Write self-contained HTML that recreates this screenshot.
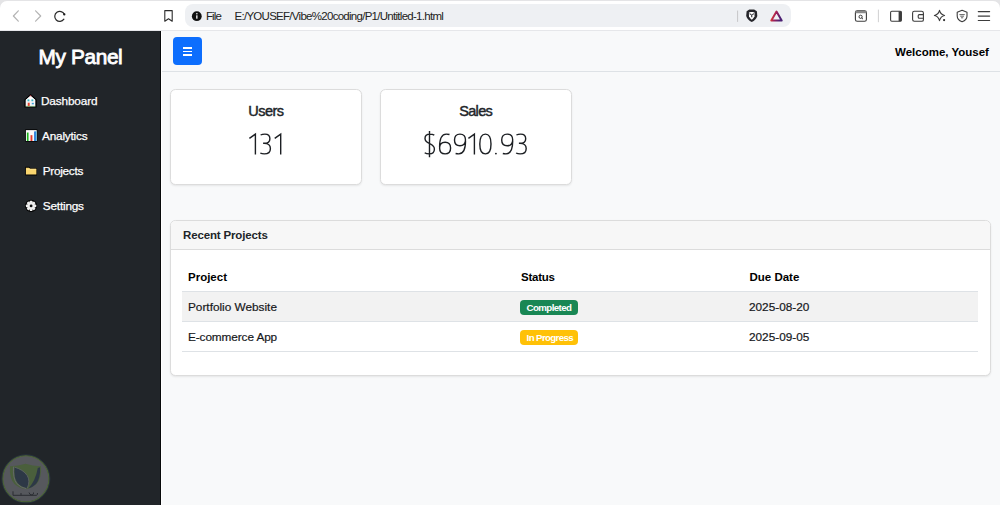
<!DOCTYPE html>
<html><head><meta charset="utf-8">
<style>
*{box-sizing:border-box;margin:0;padding:0}
html,body{width:1000px;height:505px;overflow:hidden;background:#f8f9fa;font-family:"Liberation Sans",sans-serif;position:relative}
.t{position:absolute;line-height:1;white-space:nowrap}
#chrome{position:absolute;left:0;top:0;width:1000px;height:31px;background:#e4e4e6}
#tb{position:absolute;left:0;top:1px;width:1000px;height:30px;background:#fff;border-radius:7px 7px 0 0;border-bottom:1px solid #e6e7ea}
#addr{position:absolute;left:185px;top:4px;width:606px;height:23px;background:#eef0f3;border-radius:8px}
#side{position:absolute;left:0;top:31px;width:161px;height:474px;background:#212529}
#nav{position:absolute;left:161px;top:71px;width:839px;height:1px;background:#dee2e6}
#btn{position:absolute;left:173px;top:37px;width:29px;height:28px;background:#0d6efd;border-radius:4px}
#btn i{position:absolute;left:9.8px;width:9.5px;height:1.3px;background:#fff}
.card{position:absolute;background:#fff;border:1px solid #dcdcdc;border-radius:5.5px;box-shadow:0 1px 2px rgba(0,0,0,.08)}
.badge{position:absolute;height:15px;border-radius:4px;color:#fff;font-weight:bold}
</style></head><body>
<div id="chrome"></div>
<div id="tb"></div>
<div id="addr"></div>
<svg style="position:absolute;left:0;top:0" width="1000" height="31" viewBox="0 0 1000 31">
 <g fill="none" stroke-linecap="round" stroke-linejoin="round">
  <path d="M18.3 10.8 L13.4 16 L18.3 21.2" stroke="#b4b4b4" stroke-width="1.2"/>
  <path d="M35.6 10.8 L40.7 16 L35.6 21.2" stroke="#b4b4b4" stroke-width="1.2"/>
  <path d="M64.3 14.3 A5 5 0 1 0 63.9 19.2" stroke="#2b2b2b" stroke-width="1.2"/>
  <path d="M164.8 10.6 H172.2 V21.2 L168.5 18.8 L164.8 21.2 Z" stroke="#2b2b2b" stroke-width="1.1"/>
  <path d="M737.6 11 V21.5" stroke="#c6c6c8" stroke-width="1"/>
  <path d="M878.4 10 V21.8" stroke="#d0d0d2" stroke-width="1"/>
  <rect x="855.4" y="10.9" width="11" height="10.4" rx="1.8" stroke="#3c3c3c" stroke-width="1.1"/>
  <rect x="890.6" y="11.3" width="10.8" height="10" rx="1.2" stroke="#3c3c3c" stroke-width="1.1"/>
  <path d="M912.6 13 Q912.6 11.3 914.3 11.3 H921.5 Q923.4 11.3 923.4 13 V20 Q923.4 21.3 921.7 21.3 H914.3 Q912.6 21.3 912.6 19.6 Z" stroke="#3c3c3c" stroke-width="1.1"/>
  <path d="M923.4 14.6 H919.3 Q918.2 14.6 918.2 15.8 V17 Q918.2 18.3 919.3 18.3 H923.4" stroke="#3c3c3c" stroke-width="1.1"/>
  <path d="M939.5 10.4 Q940.6 14.6 944.6 15.5 Q940.6 16.4 939.5 20.6 Q938.4 16.4 934.4 15.5 Q938.4 14.6 939.5 10.4 Z" stroke="#3c3c3c" stroke-width="1.1"/>
  <path d="M962.1 10.3 L967 12.2 V16 Q967 20 962.1 21.7 Q957.2 20 957.2 16 V12.2 Z" stroke="#3c3c3c" stroke-width="1.1"/>
  <path d="M959.8 14.6 H964.4 M960.6 16.2 H963.6 M961.4 17.8 H962.8" stroke="#555" stroke-width="0.9"/>
  <path d="M978.3 11.6 H989.6 M978.3 16.1 H989.6 M978.3 20.5 H989.6" stroke="#3c3c3c" stroke-width="1.2"/>
  <path d="M771.3 20.6 L776.5 11.6 L781.7 20.6 Z" stroke="url(#bat)" stroke-width="2"/>
 </g>
 <defs><linearGradient id="bat" x1="0" y1="0" x2="1" y2="0.3"><stop offset="0" stop-color="#ff4a1a"/><stop offset="0.5" stop-color="#9b1f5c"/><stop offset="1" stop-color="#4b2173"/></linearGradient></defs>
 <circle cx="64.3" cy="14.4" r="1.15" fill="#1a1a1a"/>
 <rect x="855.4" y="10.9" width="11" height="2.4" rx="1" fill="#8a8a8a"/>
 <circle cx="860.6" cy="16.8" r="1.6" fill="none" stroke="#3c3c3c" stroke-width="1"/>
 <path d="M861.7 17.9 L863 19.2" stroke="#3c3c3c" stroke-width="1"/>
 <rect x="898.6" y="11.3" width="2.8" height="10" fill="#3c3c3c"/>
 <circle cx="944.1" cy="20.1" r="1.1" fill="#2b2b2b"/>
 <circle cx="196.8" cy="16.2" r="4.9" fill="#111"/>
 <rect x="196.2" y="15.3" width="1.3" height="3.4" fill="#fff"/>
 <circle cx="196.85" cy="13.8" r="0.75" fill="#fff"/>
 <path d="M746.6 11.2 L749.3 9.6 H754.2 L756.9 11.2 L757.3 16 Q756 20 751.75 22 Q747.5 20 746.2 16 Z" fill="#26262b"/>
 <path d="M748.9 12.6 L750.6 11.9 H752.9 L754.6 12.6 L754.5 16.4 L752.9 18.7 L751.75 19.8 L750.6 18.7 L749 16.4 Z" fill="#fff"/>
 <path d="M749.6 13.6 L751.1 14.6 M753.9 13.6 L752.4 14.6 M751.75 14.6 V17.2" stroke="#26262b" stroke-width="1.1" fill="none"/>
</svg>
<div class="t" style="left:206px;top:10.7px;font-size:11.5px;color:#222;letter-spacing:-0.9px">File</div>
<div class="t" style="left:234.5px;top:10.7px;font-size:11.5px;color:#222;letter-spacing:-0.72px">E:/YOUSEF/Vibe%20coding/P1/Untitled-1.html</div>

<div id="side"></div>
<svg style="position:absolute;left:0;top:31px" width="161" height="474" viewBox="0 31 161 474">
 <!-- house -->
 <g transform="translate(30.5 101) scale(1.15) translate(-30.5 -101)">
 <path d="M30.5 95.6 L35.4 100 V106.2 H25.7 V100 Z" fill="#000" stroke="#000" stroke-width="1" stroke-linejoin="round"/>
 <path d="M30.5 96.4 L34.7 100.2 V105.6 H26.3 V100.2 Z" fill="#f4f4f4"/>
 <path d="M30.5 96.4 L34.7 100.2 L26.3 100.2 Z" fill="#fff"/>
 <path d="M29.2 96.9 L31.8 96.9 L30.5 95.9 Z" fill="#e0525a"/>
 <rect x="27.9" y="99.6" width="1.6" height="1.6" fill="#36b8c4"/>
 <rect x="31.3" y="99.6" width="1.6" height="1.6" fill="#36b8c4"/>
 <rect x="31.6" y="102.6" width="1.8" height="1.3" fill="#3aa0d8"/>
 <rect x="28.1" y="102.5" width="1.7" height="3.1" fill="#e8432c"/>
 <path d="M26.3 105.6 H34.7" stroke="#8fd68a" stroke-width="0.6"/>
  </g>
 <!-- chart -->
 <g transform="translate(31.3 135.5) scale(1.1) translate(-31.3 -135.5)">
 <rect x="25.8" y="129.9" width="11" height="11.2" fill="#000"/>
 <rect x="26.4" y="130.6" width="9.8" height="9.9" fill="#fafafa"/>
 <rect x="27.3" y="132.8" width="1.5" height="7.7" fill="#1bb51b"/>
 <rect x="30.6" y="135.2" width="1.7" height="5.3" fill="#e53a2a"/>
 <rect x="33.9" y="131.8" width="1.7" height="8.7" fill="#1f6fd6"/>
 <rect x="35.2" y="131.8" width="0.8" height="8.7" fill="#3fc1f0"/>
  </g>
 <!-- folder -->
 <g transform="translate(31.1 171.1) scale(1.1) translate(-31.1 -171.1)">
 <path d="M25.8 167.2 H29.5 L30.6 168.4 H36.5 V175 H25.8 Z" fill="#000"/>
 <path d="M26.4 168 H29.2 L30.3 169 H35.9 V174.3 H26.4 Z" fill="#f9d56e"/>
 <path d="M26.6 169.5 H35.7" stroke="#ffe79a" stroke-width="0.6"/>
  </g>
 <!-- gear -->
 <g transform="translate(31.1 205.9) scale(1.08) translate(-31.1 -205.9)">
 <g transform="translate(31.1 205.9)">
  <circle r="5.6" fill="#000"/>
  <g fill="#eee">
   <circle r="3.5"/>
   <rect x="-1.2" y="-4.8" width="2.4" height="9.6" rx="0.6"/>
   <rect x="-1.2" y="-4.8" width="2.4" height="9.6" rx="0.6" transform="rotate(45)"/>
   <rect x="-1.2" y="-4.8" width="2.4" height="9.6" rx="0.6" transform="rotate(90)"/>
   <rect x="-1.2" y="-4.8" width="2.4" height="9.6" rx="0.6" transform="rotate(135)"/>
  </g>
  <circle r="1.3" fill="#111"/>
 </g>
  </g>
 <!-- watermark -->
 <circle cx="25.9" cy="478.8" r="24" fill="none" stroke="#2c3a4a" stroke-width="1" opacity="0.7"/>
 <circle cx="25.9" cy="478.8" r="23" fill="#56585d" stroke="#4d6538" stroke-width="1.1"/>
 <path d="M25.5 463.8 Q33 466.3 41 466.2 Q41.8 478.5 36.5 484 Q31.5 488.4 25.5 489 Q19.5 488.4 14.5 484 Q9.2 478.5 10 466.2 Q18 466.3 25.5 463.8 Z" fill="#4a5f3c"/>
 <path d="M14.6 467.2 Q23 469.5 27.2 475.5 Q30.5 481 27.3 488 Q21.5 487.3 17.6 483 Q13.5 478 14.6 467.2 Z" fill="#2d3846"/>
 <path d="M13.6 466.6 Q12.6 478 16.8 483.6 Q21 487.8 26 488.6" fill="none" stroke="#66686d" stroke-width="0.9"/>
 <path d="M14.6 467.2 Q23 469.5 27.2 475.5 Q30.5 481 27.3 488" fill="none" stroke="#66686d" stroke-width="0.7"/>
 <path d="M40 467.2 Q40.6 478.5 36 484 Q32.5 487.5 28.4 488.4 Q35.5 481 37.8 468 Z" fill="#2d3846"/>
 <path d="M13 491.3 V495.3 H36.5 Q37.5 495.3 37.5 493 M21 493 V495.3 M29 492.5 Q29.5 495 32 495 Q34 494.5 33.5 492.5" fill="none" stroke="#2b2d33" stroke-width="1"/>
</svg>
<div class="t" style="left:38.5px;top:47.3px;font-size:20.8px;color:#fff;-webkit-text-stroke:0.8px #fff;letter-spacing:-0.35px">My Panel</div>
<div class="t" style="left:41px;top:96px;font-size:11.8px;color:#fff;letter-spacing:-0.15px;-webkit-text-stroke:0.25px #fff">Dashboard</div>
<div class="t" style="left:42px;top:131px;font-size:11.8px;color:#fff;letter-spacing:-0.2px;-webkit-text-stroke:0.25px #fff">Analytics</div>
<div class="t" style="left:42.8px;top:166px;font-size:11.8px;color:#fff;letter-spacing:-0.3px;-webkit-text-stroke:0.25px #fff">Projects</div>
<div class="t" style="left:42.8px;top:201px;font-size:11.8px;color:#fff;letter-spacing:-0.2px;-webkit-text-stroke:0.25px #fff">Settings</div>

<div id="nav"></div>
<div style="position:absolute;left:160px;top:31px;width:1px;height:474px;background:#08090a"></div>
<div style="position:absolute;left:161px;top:31px;width:1px;height:474px;background:#fff"></div>
<div id="btn"><i style="top:10.25px"></i><i style="top:13.85px"></i><i style="top:17.45px"></i></div>
<div class="t" style="left:895px;top:47px;font-size:11.5px;font-weight:bold;color:#000">Welcome, Yousef</div>

<div class="card" style="left:170px;top:89px;width:192px;height:96px"></div>
<div class="card" style="left:380px;top:89px;width:192px;height:96px"></div>
<div class="t" style="left:248.2px;top:103.7px;font-size:14.5px;color:#212529;-webkit-text-stroke:0.45px #212529;letter-spacing:-0.5px">Users</div>
<div class="t" style="left:459.2px;top:103.7px;font-size:14.5px;color:#212529;-webkit-text-stroke:0.45px #212529;letter-spacing:-0.65px">Sales</div>

<svg style="position:absolute;left:0;top:0" width="1000" height="200" viewBox="0 0 1000 200">
 <defs>
  <path id="g1" d="M0.4 5.0 L6.4 0.7 V21.2"/>
  <path id="g0" d="M6.3 0.7 C9.8 0.7 11.9 4.4 11.9 10.6 C11.9 16.8 9.8 20.5 6.3 20.5 C2.8 20.5 0.7 16.8 0.7 10.6 C0.7 4.4 2.8 0.7 6.3 0.7 Z"/>
  <path id="g6" d="M10.6 1.1 C9.6 0.8 8.4 0.7 7.4 0.7 C3.0 0.7 0.7 5 0.7 13.5 M6.2 8.8 C9.6 8.8 11.7 11.1 11.7 14.6 C11.7 18.2 9.5 20.5 6.2 20.5 C2.9 20.5 0.7 18.2 0.7 14.6 C0.7 11.1 2.8 8.8 6.2 8.8 Z"/>
  <path id="g9" d="M1.8 20.1 C2.8 20.4 4.0 20.5 5.0 20.5 C9.4 20.5 11.7 16.2 11.7 7.7 M6.2 12.4 C2.8 12.4 0.7 10.1 0.7 6.6 C0.7 3.0 2.9 0.7 6.2 0.7 C9.5 0.7 11.7 3.0 11.7 6.6 C11.7 10.1 9.6 12.4 6.2 12.4 Z"/>
  <path id="g3" d="M0.9 1.6 C2.2 0.9 3.8 0.7 5.2 0.7 C8.5 0.7 10.2 2.6 10.2 5.3 C10.2 8.3 8.0 9.9 4.4 9.9 H3.4 M4.4 9.9 C8.6 9.9 10.7 12.0 10.7 15.0 C10.7 18.5 8.3 20.5 4.6 20.5 C3.0 20.5 1.6 20.2 0.6 19.6"/>
  <path id="gS" d="M10.3 1.8 C9.0 1.0 7.4 0.7 5.9 0.7 C2.9 0.7 1.0 2.4 1.0 5.0 C1.0 11.0 10.4 9.5 10.4 15.5 C10.4 18.6 8.4 20.5 5.2 20.5 C3.5 20.5 1.8 20.1 0.7 19.3 M5.5 -2.5 V23.8"/>
 </defs>
 <g fill="none" stroke="#1c1f23" stroke-width="1.4">
  <use href="#g1" x="249" y="133.4"/>
  <use href="#g3" x="259.7" y="133.4"/>
  <use href="#g1" x="274.3" y="133.4"/>
  <use href="#gS" x="424" y="133.4"/>
  <use href="#g6" x="438.9" y="133.4"/>
  <use href="#g9" x="453.8" y="133.4"/>
  <use href="#g1" x="468" y="133.4"/>
  <use href="#g0" x="479.1" y="133.4"/>
  <use href="#g9" x="501.0" y="133.4"/>
  <use href="#g3" x="515.5" y="133.4"/>
 </g>
 <circle cx="495.9" cy="153.6" r="0.95" fill="#212529"/>
</svg>

<div class="card" style="left:170px;top:219.5px;width:821px;height:156px;overflow:hidden">
  <div style="position:absolute;left:0;top:0;width:100%;height:29px;background:#f7f7f7;border-bottom:1px solid #dcdcdc"></div>
</div>
<div class="t" style="left:183px;top:229.5px;font-size:11.5px;font-weight:bold;color:#212529;letter-spacing:-0.15px">Recent Projects</div>

<div style="position:absolute;left:182px;top:290.5px;width:796px;height:1px;background:#dee2e6"></div>
<div style="position:absolute;left:182px;top:291.5px;width:796px;height:29.5px;background:#f2f2f2"></div>
<div style="position:absolute;left:182px;top:321px;width:796px;height:1px;background:#dee2e6"></div>
<div style="position:absolute;left:182px;top:351px;width:796px;height:1px;background:#dee2e6"></div>

<div class="t" style="left:188px;top:272px;font-size:11.5px;font-weight:bold;color:#000">Project</div>
<div class="t" style="left:521px;top:272px;font-size:11.5px;font-weight:bold;color:#000;letter-spacing:-0.25px">Status</div>
<div class="t" style="left:749.5px;top:272px;font-size:11.5px;font-weight:bold;color:#000">Due Date</div>

<div class="t" style="left:188px;top:302px;font-size:11.8px;color:#16181b;letter-spacing:0px;-webkit-text-stroke:0.2px #16181b">Portfolio Website</div>
<div class="t" style="left:188px;top:332px;font-size:11.8px;color:#16181b;letter-spacing:-0.1px;-webkit-text-stroke:0.2px #16181b">E-commerce App</div>
<div class="t" style="left:749px;top:302px;font-size:11.8px;color:#16181b;letter-spacing:0px;-webkit-text-stroke:0.2px #16181b">2025-08-20</div>
<div class="t" style="left:749px;top:332px;font-size:11.8px;color:#16181b;letter-spacing:0px;-webkit-text-stroke:0.2px #16181b">2025-09-05</div>

<div class="badge" style="left:520px;top:300px;width:58px;background:#198754"></div>
<div class="badge" style="left:520px;top:330px;width:58px;background:#ffc107"></div>
<div class="t" style="left:526.6px;top:302.6px;font-size:9.7px;font-weight:bold;color:#fff;letter-spacing:-0.6px">Completed</div>
<div class="t" style="left:526.6px;top:333px;font-size:9.7px;font-weight:bold;color:#fff;letter-spacing:-0.62px">In Progress</div>

</body></html>
